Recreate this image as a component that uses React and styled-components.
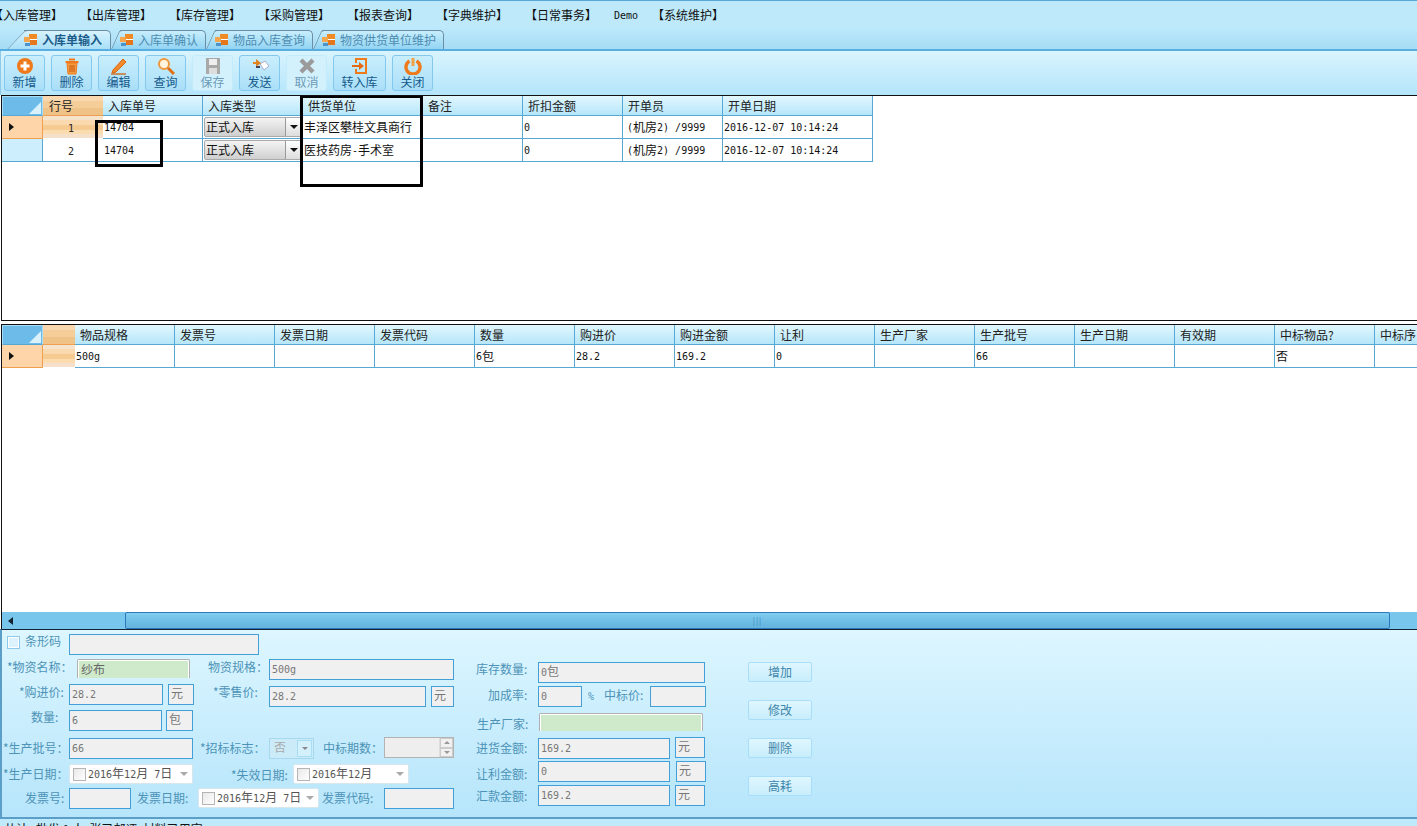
import React from "react";
import styled, { createGlobalStyle } from "styled-components";

const CJK = `"Noto Sans CJK SC", "Liberation Sans", sans-serif`;

const Global = createGlobalStyle`
  html, body { margin: 0; padding: 0; background: #fff; }
  body { font: 12px/14px ${CJK}; overflow: hidden; }
  * { box-sizing: border-box; }
`;

const Page = styled.div`
  width: 1417px; height: 826px; overflow: hidden; display: flex; flex-direction: column; background: #fff;
`;
const M = styled.span`
  font-family: "DejaVu Sans Mono", monospace; font-size: 10px; white-space: pre;
`;

/* ---------- menu ---------- */
const MenuBar = styled.div`
  height: 27px; flex: none; display: flex; align-items: center; gap: 17px; padding-top: 1px;
  background: #bde9fb; border-top: 1px solid #58a6d6; color: #111; overflow: hidden;
`;
const MenuItem = styled.div`
  flex: none; width: ${p => p.$w || 72}px; white-space: nowrap; margin-left: ${p => p.$ml || 0}px;
`;

/* ---------- tabs ---------- */
const TabBar = styled.div`
  height: 24px; flex: none; display: flex; align-items: flex-end; padding-left: 24px;
  background: linear-gradient(#bde9fb, #a6dcf5); border-bottom: 2px solid #58aee0;
`;
const Tab = styled.div`
  position: relative; height: 19px; width: ${p => p.$w}px; flex: none; display: flex; align-items: center; gap: 4px;
  margin-right: 9px; white-space: nowrap; z-index: ${p => (p.$active ? 2 : 1)};
  color: ${p => (p.$active ? "#1c5c8a" : "#4d8cb0")}; font-weight: ${p => (p.$active ? 700 : 400)};
  background: ${p => (p.$active ? "linear-gradient(#d6f3fe, #a9dff8)" : "linear-gradient(#c8eefd, #92d4f3)")};
  border: 1px solid #6c8ea3; border-left: 0; border-bottom: 0; border-radius: 0 5px 0 0;
  &::before {
    content: ""; position: absolute; top: -1px; bottom: 0; z-index: 0;
    left: ${p => (p.$active ? -18 : -9)}px; width: ${p => (p.$active ? 28 : 18)}px;
    background: inherit; border-left: 1px solid #6c8ea3; border-top: 1px solid #6c8ea3;
    transform: skewX(${p => (p.$active ? -44 : -24)}deg); transform-origin: 0 100%; border-radius: 3px 0 0 0;
    ${p => (p.$active ? "margin-left: 1px;" : "")}
  }
  & > * { position: relative; z-index: 1; }
`;

/* ---------- toolbar ---------- */
const Toolbar = styled.div`
  height: 44px; flex: none; display: flex; gap: 6px; padding: 4px 0 0 4px;
  background: linear-gradient(#d9f4fe, #b4e5fb); box-shadow: inset 1px 0 0 #8fc9e8;
`;
const ToolButton = styled.div`
  width: ${p => p.$w || 41}px; height: 36px; flex: none; display: flex; flex-direction: column; align-items: center;
  padding-top: 1px; border: 1px solid ${p => (p.$off ? "#c3ecfb" : "#83c8ee")}; border-radius: 3px;
  background: ${p => (p.$off ? "#d3f1fd" : "linear-gradient(#c9eefd, #aadff8)")};
  color: ${p => (p.$off ? "#6b9bb8" : "#155a8c")};
`;
const ToolIcon = styled.svg`
  width: 18px; height: 18px; flex: none;
`;
const ToolText = styled.div`
  line-height: 14px;
`;

/* ---------- data grid ---------- */
const GridPanel = styled.div`
  position: relative; height: ${p => p.$h}px; flex: none; overflow: hidden; background: #fff;
  border: solid #111; border-width: 1px 0 ${p => (p.$closed ? 1 : 0)}px 1px;
  margin: ${p => p.$mt || 0}px 0 0 1px;
`;
const GridRow = styled.div`
  display: flex; height: ${p => p.$h}px; width: 1500px;
`;
const HeadCell = styled.div`
  width: ${p => p.$w}px; flex: none; padding: 3px 0 0 5px; color: #222;
  background: linear-gradient(#e2f7fe, #b6e6fa);
  border: solid #57a8d2; border-width: 0 1px 1px 0;
`;
const Corner = styled.div`
  position: relative; width: 41px; flex: none; background: #6dbbe8; border: 1px solid #a9dcf5;
  border-bottom-color: #57a8d2;
  &::after {
    content: ""; position: absolute; right: 1px; bottom: 1px; width: 0; height: 0;
    border-left: 12px solid transparent; border-bottom: 12px solid #d8f1fb;
  }
`;
const OrangeHead = styled.div`
  width: ${p => p.$w}px; flex: none; padding: 3px 0 0 6px; color: #222;
  background: linear-gradient(#f9d8b0 0 25%, #f5cd98 25% 65%, #efc287 65% 100%);
  border-bottom: 1px solid #eea050;
`;
const RowHead = styled.div`
  position: relative; width: 41px; flex: none; display: flex; align-items: center; padding-left: 7px;
  background: ${p => (p.$on ? "#fdd5a9" : "#cdeefc")};
  border: solid ${p => (p.$on ? "#ee9f50" : "#57a8d2")}; border-width: 0 1px 1px 0;
  ${p => p.$on && "&::before { content: ''; border-left: 5px solid #111; border-top: 4px solid transparent; border-bottom: 4px solid transparent; }"}
`;
const NumCell = styled.div`
  width: ${p => p.$w}px; flex: none; text-align: center; padding: 4px 4px 0 0; color: #222;
  background: ${p => (p.$on ? "linear-gradient(#f6e3cc 0 20%, #fbd9ae 20% 40%, #f6cb92 40% 62%, #fbdcb0 62% 82%, #f5e1cb 82%)" : "#fff")};
  border-bottom: 1px solid ${p => (p.$on ? "#fff" : "#57a8d2")};
`;
const Cell = styled.div`
  width: ${p => p.$w}px; flex: none; padding: 4px 0 0 ${p => p.$pad ?? 1}px; color: #111; white-space: nowrap; overflow: hidden;
  border: solid #57a8d2; border-width: 0 1px 1px 0; background: #fff;
  ${M} { vertical-align: 1px; }
`;
const ComboCell = styled(Cell)`
  padding: 1px 0 0 1px; display: flex;
`;
const Combo = styled.div`
  width: 99px; height: 20px; display: flex; border: 1px solid #aaa; border-radius: 2px; padding-left: 1px; line-height: 18px;
  background: linear-gradient(#f4f4f4, #cfcfcf); color: #111;
`;
const ComboBtn = styled.div`
  margin-left: auto; width: 16px; height: 18px; background: linear-gradient(#fff, #ddd); border-left: 1px solid #999;
  display: flex; align-items: center; justify-content: center;
  &::before { content: ""; border-top: 4px solid #111; border-left: 4px solid transparent; border-right: 4px solid transparent; }
`;
const Annotation = styled.div`
  position: absolute; left: ${p => p.$x}px; top: ${p => p.$y}px; width: ${p => p.$w}px; height: ${p => p.$h}px;
  border: 3px solid #000; pointer-events: none;
`;
const Scroll = styled.div`
  position: absolute; left: 0; right: 0; bottom: 0; height: 17px; display: flex;
  background: #78c6ec;
`;
const ScrollLeft = styled.div`
  width: 123px; display: flex; align-items: center; padding-left: 6px;
  &::before { content: ""; border-right: 5px solid #123; border-top: 4px solid transparent; border-bottom: 4px solid transparent; }
`;
const ScrollThumb = styled.div`
  width: 1265px; border: 1px solid #2c78bd; border-radius: 2px;
  background: linear-gradient(#82cdf0, #6ebde6 55%, #64b3de);
  display: flex; align-items: center; justify-content: center; color: #3a87bd; font-size: 8px; letter-spacing: 1px;
`;

/* ---------- form ---------- */
const Form = styled.div`
  height: 190px; flex: none; display: flex; padding: 4px 0 0 0; color: #4d93b7;
  background: linear-gradient(#ddf6ff, #b6e5fb);
  border: solid #5b9fc8; border-width: 0 0 2px 2px; border-top: 1px solid #123;
`;
const LeftCol = styled.div`
  width: 454px; flex: none; display: flex; flex-direction: column;
`;
const MidCol = styled.div`
  width: 240px; flex: none; margin-left: 20px; padding-top: 28px; display: flex; flex-direction: column;
`;
const BtnCol = styled.div`
  margin-left: 32px; padding-top: 28px; display: flex; flex-direction: column; gap: 18px;
`;
const FormRow = styled.div`
  display: flex; height: ${p => p.$h}px; flex: none; align-items: flex-start;
`;
const Label = styled.div`
  width: ${p => p.$w}px; flex: none; padding-left: ${p => p.$pad || 0}px; padding-top: ${p => (p.$dy ?? 3)}px;
  white-space: nowrap; margin-left: ${p => p.$ml || 0}px;
`;
const Box = styled.div`
  width: ${p => p.$w}px; height: ${p => p.$h || 21}px; flex: none; margin-left: ${p => p.$ml || 0}px; margin-top: ${p => p.$mt || 0}px;
  border: 1px solid #439fd8; background: #f0f0f0; color: #777; padding: 1px 0 0 2px; line-height: 14px; white-space: nowrap;
`;
const GreenBox = styled.div`
  width: ${p => p.$w}px; height: ${p => p.$h}px; flex: none; margin-left: ${p => p.$ml || 0}px;
  border: solid #b0b0b0; border-width: 1px 1px 0 1px; border-radius: 2px 2px 0 0; background: #cfeaca;
  box-shadow: inset 0 1px 0 #fff, inset 1px 0 0 #fff, inset -1px 0 0 #fff; color: #666; padding: 2px 0 0 3px;
`;
const Check = styled.div`
  width: 13px; height: 13px; flex: none; margin: 2px 5px 0 5px; border: 1px solid #8cc9ec; box-shadow: inset 0 0 0 1px #fff; background: #dcf2fc;
`;
const BarLabel = styled.div`
  width: 44px; flex: none; color: #4d93b7;
`;
const DateBox = styled.div`
  width: ${p => p.$w}px; height: 20px; flex: none; margin-left: ${p => p.$ml || 0}px; display: flex; align-items: center; gap: 2px; padding-left: 3px; overflow: hidden;
  background: #fff; border: 1px solid #d8e6ee; border-radius: 2px; color: #555; white-space: nowrap;
`;
const DateCheck = styled.div`
  width: 13px; height: 13px; flex: none; border: 1px solid #b5b5b5; background: linear-gradient(135deg, #e8e8e8, #fff);
`;
const DateArrow = styled.div`
  position: absolute; right: 5px; top: 8px; border-top: 4px solid #aaa; border-left: 4px solid transparent; border-right: 4px solid transparent;
`;
const DateWrap = styled.div`
  position: relative; flex: none;
`;
const DateText = styled.div`
  width: ${p => p.$w}px; overflow: hidden; flex: none;
`;
const SelectBox = styled.div`
  width: 45px; height: 21px; flex: none; display: flex; border: 1px solid #a6d8ee; background: #ccebf8; color: #aaa; padding: 1px 1px 1px 4px;
`;
const SelectBtn = styled.div`
  margin-left: auto; width: 15px; border: 1px solid #a7def5; background: #d4f0fb; display: flex; align-items: center; justify-content: center;
  &::before { content: ""; border-top: 3px solid #888; border-left: 3px solid transparent; border-right: 3px solid transparent; }
`;
const Spin = styled.div`
  width: 70px; height: 21px; flex: none; display: flex; justify-content: flex-end; border: 1px solid #b3b3b3; background: #eee; margin-top: -1px;
`;
const SpinBtns = styled.div`
  width: 14px; display: flex; flex-direction: column; border-left: 1px solid #ddd; background: #fff;
`;
const SpinBtn = styled.div`
  flex: 1; display: flex; align-items: center; justify-content: center; background: #f1f1f1; border: 1px solid #ccc;
  &::before { content: ""; border-left: 3px solid transparent; border-right: 3px solid transparent; ${p => (p.$up ? "border-bottom" : "border-top")}: 3px solid #999; }
`;
const ActionBtn = styled.div`
  width: 64px; height: 20px; text-align: center; line-height: 18px; color: #3f86ab; border: 1px solid #a9defa; border-radius: 2px;
  background: linear-gradient(#dff6fe, #c8edfc);
`;
const Status = styled.div`
  flex: 1; background: #bfeafc; color: #111; padding: 3px 0 0 4px; white-space: pre; overflow: hidden;
`;

/* ---------- icons ---------- */
const TabIcon = () => (
  <svg width="14" height="13" viewBox="0 0 14 13">
    <rect x="5" y="0" width="8" height="5" fill="#f08a24" />
    <rect x="0" y="3" width="6" height="5" fill="#f4a64f" />
    <rect x="6" y="6" width="7" height="5" fill="#e6761c" />
    <rect x="1" y="9" width="5" height="3" fill="#4d93c9" />
    <rect x="6" y="5" width="7" height="1" fill="#fff" />
  </svg>
);
const O1 = "#ee7a1c";
const icons = {
  add: (<><circle cx="9" cy="9" r="8" fill={O1} /><path d="M9 4.5v9M4.5 9h9" stroke="#fff" strokeWidth="3" /></>),
  del: (<><path d="M6 2.5h6M2.5 5h13" stroke={O1} strokeWidth="2" /><path d="M4 6h10l-1 11H5z" fill="#f49a3f" stroke={O1} /><path d="M7 8v7M9 8v7M11 8v7" stroke="#c9560e" /></>),
  edit: (<><path d="M3 13 13 2l3 3L6 15l-4 1z" fill="#f08a2c" stroke="#d9640f" /><path d="M1 17h15" stroke="#c96a20" strokeWidth="1.4" /></>),
  find: (<><circle cx="7" cy="7" r="5" fill="#fff4df" stroke="#f0973a" strokeWidth="2" /><path d="m11 11 6 6" stroke="#e36f14" strokeWidth="3" /></>),
  save: (<><path d="M2 1h14v16H2z" fill="#a9a9a9" /><rect x="5" y="2" width="8" height="6" fill="#eee" /><rect x="5" y="11" width="8" height="6" fill="#ddd" /></>),
  send: (<><path d="m9 7 5-3 4 5-5 4z" fill="#fff" stroke="#aac" /><path d="M2 5h3V2l5 4-5 4V7H2z" fill="#e0851f" /><path d="M5 9h4v2H5z" fill="#445" /></>),
  cancel: (<path d="M3 3 15 15M15 3 3 15" stroke="#9b9b9b" strokeWidth="4.4" />),
  inbox: (<><path d="M4 1h12v16H4v-5h2v3h8V3H6v3H4z" fill={O1} /><path d="M1 8h7V5l5 4-5 4v-3H1z" fill="#e86a10" /></>),
  power: (<><path d="M5.5 4a7 7 0 1 0 7 0" fill="none" stroke={O1} strokeWidth="3.4" /><path d="M9 1v8" stroke="#f2a044" strokeWidth="3" /></>),
};
const Icon = ({ n }) => <ToolIcon viewBox="0 0 18 18">{icons[n]}</ToolIcon>;

const menus = [["【入库管理】", -9], ["【出库管理】"], ["【库存管理】"], ["【采购管理】"], ["【报表查询】"], ["【字典维护】"], ["【日常事务】"]];
const tools = [
  ["新增", "add"], ["删除", "del"], ["编辑", "edit"], ["查询", "find"], ["保存", "save", 1], ["发送", "send"], ["取消", "cancel", 1], ["转入库", "inbox", 0, 53], ["关闭", "power"],
];
const head1 = [["入库单号", 100], ["入库类型", 100], ["供货单位", 120], ["备注", 100], ["折扣金额", 100], ["开单员", 100], ["开单日期", 150]];
const head2 = [["物品规格", 100], ["发票号", 100], ["发票日期", 100], ["发票代码", 100], ["数量", 100], ["购进价", 100], ["购进金额", 100], ["让利", 100], ["生产厂家", 100], ["生产批号", 100], ["生产日期", 100], ["有效期", 100], ["中标物品?", 100], ["中标序", 100]];
const rows1 = [["1", "丰泽区攀桂文具商行", true], ["2", <>医技药房<M>-</M>手术室</>, false]];
const row2 = [<M>500g</M>, "", "", "", <><M>6</M>包</>, <M>28.2</M>, <M>169.2</M>, <M>0</M>, "", <M>66</M>, "", "", "否", ""];

const DateField = ({ w, ml, textW }) => (
  <DateWrap>
    <DateBox $w={w} $ml={ml}>
      <DateCheck />
      <DateText $w={textW}><M>2016</M>年<M>12</M>月<M> 7</M>日</DateText>
    </DateBox>
    <DateArrow />
  </DateWrap>
);

export default function App() {
  return (
    <Page>
      <Global />
      <MenuBar>
        {menus.map(([t, ml]) => <MenuItem key={t} $ml={ml}>{t}</MenuItem>)}
        <MenuItem $w={36} $ml={0}><M>Demo</M></MenuItem>
        <MenuItem $ml={-15}>【系统维护】</MenuItem>
      </MenuBar>
      <TabBar>
        <Tab $active $w={87}><TabIcon /><span>入库单输入</span></Tab>
        <Tab $w={86}><TabIcon /><span>入库单确认</span></Tab>
        <Tab $w={98}><TabIcon /><span>物品入库查询</span></Tab>
        <Tab $w={122}><TabIcon /><span>物资供货单位维护</span></Tab>
      </TabBar>
      <Toolbar>
        {tools.map(([t, n, off, w]) => (
          <ToolButton key={t} $off={off} $w={w}><Icon n={n} /><ToolText>{t}</ToolText></ToolButton>
        ))}
      </Toolbar>

      <GridPanel $h={226} $closed>
        <GridRow $h={20}>
          <Corner />
          <OrangeHead $w={60}>行号</OrangeHead>
          {head1.map(([t, w]) => <HeadCell key={t} $w={w}>{t}</HeadCell>)}
        </GridRow>
        {rows1.map(([n, sup, on]) => (
          <GridRow $h={23} key={n}>
            <RowHead $on={on} />
            <NumCell $w={60} $on={on}><M>{n}</M></NumCell>
            <Cell $w={100}><M>14704</M></Cell>
            <ComboCell $w={100}><Combo>正式入库<ComboBtn /></Combo></ComboCell>
            <Cell $w={120}>{sup}</Cell>
            <Cell $w={100} />
            <Cell $w={100}><M>0</M></Cell>
            <Cell $w={100} $pad={4}><M>(</M>机房<M>2) /9999</M></Cell>
            <Cell $w={150}><M>2016-12-07 10:14:24</M></Cell>
          </GridRow>
        ))}
        <Annotation $x={93} $y={24} $w={68} $h={47} />
        <Annotation $x={298} $y={-1} $w={123} $h={92} />
      </GridPanel>

      <GridPanel $h={305} $mt={3}>
        <GridRow $h={20}>
          <Corner />
          <OrangeHead $w={32} />
          {head2.map(([t, w]) => <HeadCell key={t} $w={w}>{t}</HeadCell>)}
        </GridRow>
        <GridRow $h={23}>
          <RowHead $on />
          <NumCell $w={32} $on />
          {row2.map((c, i) => <Cell key={i} $w={100}>{c}</Cell>)}
        </GridRow>
        <Scroll><ScrollLeft /><ScrollThumb>|||</ScrollThumb></Scroll>
      </GridPanel>

      <Form>
        <LeftCol>
          <FormRow $h={25}>
            <Check /><BarLabel>条形码</BarLabel>
            <Box $w={190} />
          </FormRow>
          <FormRow $h={25}>
            <Label $w={75} $pad={5} $dy={1}>*物资名称：</Label>
            <GreenBox $w={113} $h={19}>纱布</GreenBox>
            <Label $w={79} $pad={18} $dy={1}>物资规格：</Label>
            <Box $w={185}><M>500g</M></Box>
          </FormRow>
          <FormRow $h={26}>
            <Label $w={67} $pad={17} $dy={1}>*购进价:</Label>
            <Box $w={94}><M>28.2</M></Box>
            <Box $w={26} $ml={5}>元</Box>
            <Label $w={75} $pad={19} $dy={1}>*零售价:</Label>
            <Box $w={157} $mt={2}><M>28.2</M></Box>
            <Box $w={23} $ml={5} $mt={2}>元</Box>
          </FormRow>
          <FormRow $h={28}>
            <Label $w={67} $pad={29} $dy={0}>数量:</Label>
            <Box $w={93}><M>6</M></Box>
            <Box $w={27} $ml={4}>包</Box>
          </FormRow>
          <FormRow $h={26}>
            <Label $w={67} $pad={1}>*生产批号：</Label>
            <Box $w={124}><M>66</M></Box>
            <Label $w={76} $pad={7}>*招标标志：</Label>
            <SelectBox>否<SelectBtn /></SelectBox>
            <Label $w={70} $pad={9}>中标期数：</Label>
            <Spin><SpinBtns><SpinBtn $up /><SpinBtn /></SpinBtns></Spin>
          </FormRow>
          <FormRow $h={24}>
            <Label $w={67} $pad={1}>*生产日期：</Label>
            <DateField w={124} />
            <Label $w={100} $pad={38} $dy={4}>*失效日期:</Label>
            <DateField w={116} textW={62} />
          </FormRow>
          <FormRow $h={24}>
            <Label $w={67} $pad={23}>发票号:</Label>
            <Box $w={62} />
            <Label $w={67} $pad={6}>发票日期:</Label>
            <DateField w={121} />
            <Label $w={65} $pad={3}>发票代码:</Label>
            <Box $w={70} />
          </FormRow>
        </LeftCol>
        <MidCol>
          <FormRow $h={24}>
            <Label $w={62} $dy={0}>库存数量:</Label>
            <Box $w={167}><M>0</M>包</Box>
          </FormRow>
          <FormRow $h={27}>
            <Label $w={62} $pad={12} $dy={2}>加成率:</Label>
            <Box $w={44}><M>0</M></Box>
            <Label $w={22} $pad={6} $dy={2}><M>%</M></Label>
            <Label $w={46} $dy={2}>中标价:</Label>
            <Box $w={56} />
          </FormRow>
          <FormRow $h={25}>
            <Label $w={63} $pad={1} $dy={4}>生产厂家:</Label>
            <GreenBox $w={164} $h={18} />
          </FormRow>
          <FormRow $h={23}>
            <Label $w={62}>进货金额:</Label>
            <Box $w={132}><M>169.2</M></Box>
            <Box $w={30} $ml={5} $mt={-1}>元</Box>
          </FormRow>
          <FormRow $h={24}>
            <Label $w={62} $dy={6}>让利金额:</Label>
            <Box $w={132}><M>0</M></Box>
            <Box $w={30} $ml={6}>元</Box>
          </FormRow>
          <FormRow $h={22}>
            <Label $w={62} $dy={4}>汇款金额:</Label>
            <Box $w={132}><M>169.2</M></Box>
            <Box $w={30} $ml={5}>元</Box>
          </FormRow>
        </MidCol>
        <BtnCol>
          <ActionBtn>增加</ActionBtn>
          <ActionBtn>修改</ActionBtn>
          <ActionBtn>删除</ActionBtn>
          <ActionBtn>高耗</ActionBtn>
        </BtnCol>
      </Form>
      <Status>共计   批发 1 人  张已邮评  材料已用完</Status>
    </Page>
  );
}
